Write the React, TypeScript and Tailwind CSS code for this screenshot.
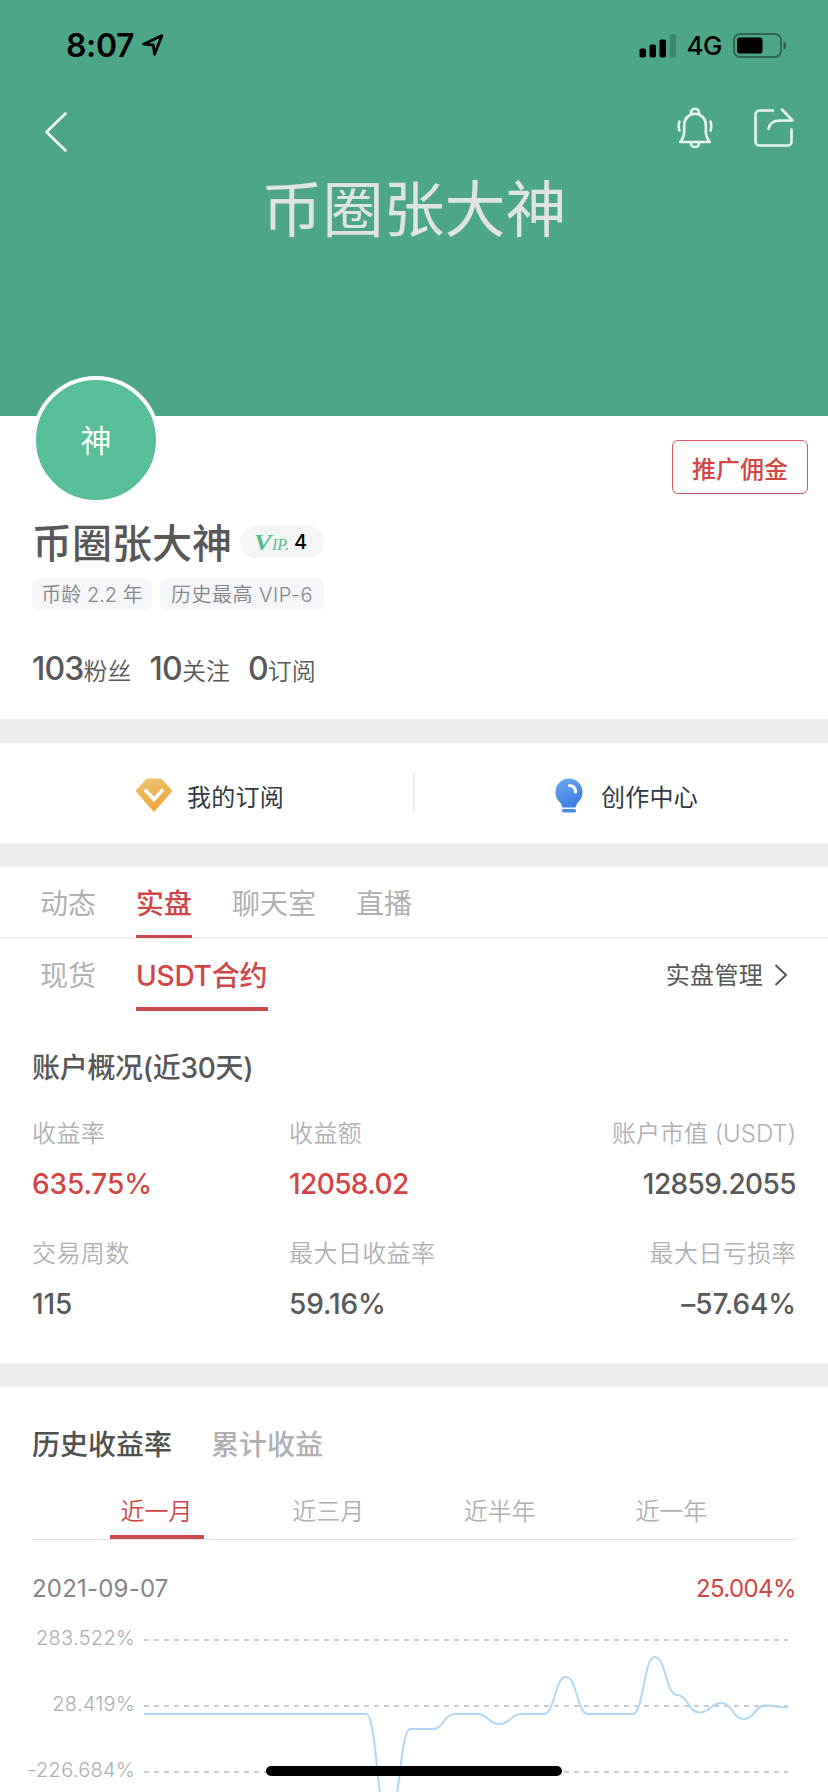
import clsx from "clsx";

const overview = [
  { label: "收益率", value: "635.75%", red: true },
  { label: "收益额", value: "12058.02", red: true },
  { label: "账户市值 (USDT)", value: "12859.2055" },
  { label: "交易周数", value: "115" },
  { label: "最大日收益率", value: "59.16%" },
  { label: "最大日亏损率", value: "–57.64%" },
];

const ranges = ["近一月", "近三月", "近半年", "近一年"];

// one y position per day, in chart pixels
const series = [
  94, 94, 94, 94, 94, 94, 94, 94, 94, 94, 94, 203, 109, 109, 94, 94, 104, 94,
  94, 57, 94, 94, 94, 37, 75, 92.5, 83, 99, 85.5, 87.5,
];

function linePath(values: number[]) {
  const step = 644 / (values.length - 1);
  return values
    .map((y, i) => {
      const x = i * step;
      if (i === 0) return `M${x} ${y}`;
      const mid = x - step / 2;
      return `C${mid} ${values[i - 1]} ${mid} ${y} ${x} ${y}`;
    })
    .join(" ");
}

function StatusBar() {
  return (
    <div className="flex h-[92px] items-center justify-between pl-[66px] pr-[41px] text-black">
      <div className="flex items-center gap-[8px]">
        <span className="text-[32px] font-semibold leading-none tracking-[-0.4px]">8:07</span>
        <svg width="22" height="22" viewBox="0 0 22 22" fill="none" className="mb-0.5">
          <path
            d="M1.5 10.2 20 1.6 12.6 20.2 11.2 11z"
            stroke="currentColor"
            strokeWidth="2.8"
            strokeLinejoin="round"
          />
        </svg>
      </div>
      <div className="flex items-center">
        <svg width="38" height="24" viewBox="0 0 38 24" fill="currentColor">
          <rect x="0.5" y="14.5" width="6.5" height="9" rx="1.8" />
          <rect x="10.5" y="10.5" width="6.5" height="13" rx="1.8" />
          <rect x="20.5" y="5.5" width="6.5" height="18" rx="1.8" />
          <rect x="30.7" y="0" width="6.5" height="23.5" rx="1.8" opacity="0.2" />
        </svg>
        <span className="ml-[10px] text-[26px] font-[450] leading-none tracking-[-0.5px]">4G</span>
        <svg width="54" height="26" viewBox="0 0 54 26" className="ml-[11px]">
          <rect x="1" y="1" width="47" height="23" rx="6" fill="none" stroke="black" strokeWidth="1.8" opacity="0.4" />
          <rect x="4" y="4.5" width="25.5" height="16" rx="2.8" />
          <path d="M50.5 8.5c3.2 1.4 3.2 7 0 8.4z" opacity="0.45" />
        </svg>
      </div>
    </div>
  );
}

function BellIcon() {
  return (
    <svg width="36" height="42" viewBox="0 0 36 42" fill="none" stroke="#e6f5ee" strokeWidth="2.6" strokeLinecap="round" strokeLinejoin="round">
      <path d="M14 6.800v-1.200a4 3.800 0 0 1 8 0v1.200" />
      <path d="M3.200 35c2.800-3.400 4-6.800 4-11v-6.400a10.800 10.800 0 0 1 21.600 0v6.400c0 4.200 1.200 7.600 4 11z" />
      <path d="M14 36.400a4 3.600 0 0 0 8 0" />
      <path d="M2.400 14.500q-1.400 4.500 0 9M33.600 14.500q1.400 4.500 0 9" />
    </svg>
  );
}

function ShareIcon() {
  return (
    <svg width="42" height="42" viewBox="0 0 42 42" fill="none" stroke="#e6f5ee" strokeWidth="2.6" strokeLinecap="round" strokeLinejoin="round">
      <path d="M20 3.500H6.500a4 4 0 0 0-4 4v27a4 4 0 0 0 4 4h28a4 4 0 0 0 4-4V22.500" />
      <path d="M29 2.500 39.500 13.500H27c-6.500 0-10.500 3-11.500 8.500" />
    </svg>
  );
}

function Header() {
  return (
    <header className="h-[416px] bg-[#4da786]">
      <StatusBar />
      <div className="flex h-[80px] items-center justify-between pl-[44px] pr-[33px]">
        <svg width="24" height="40" viewBox="0 0 24 40" fill="none">
          <path d="M21.500 1.500 2.500 20 21.500 38.500" stroke="#f4fffa" strokeWidth="2.500" strokeLinecap="round" strokeLinejoin="round" />
        </svg>
        <div className="mb-[8px] flex items-center gap-[40px]">
          <BellIcon />
          <ShareIcon />
        </div>
      </div>
      <h1 className="mt-[6px] text-center text-[61px] leading-[64px] text-[#dfe3e1]">币圈张大神</h1>
    </header>
  );
}

function Profile() {
  const stats = [
    ["103", "粉丝"],
    ["10", "关注"],
    ["0", "订阅"],
  ];
  return (
    <section className="h-[303px] pl-8 pr-5 text-[#585858]">
      <div className="flex h-[88px] items-start justify-between">
        <div className="relative -mt-10 flex size-32 items-center justify-center rounded-full border-4 border-white bg-[#58be98] text-[31px] leading-none text-white">
          神
        </div>
        <button className="mt-6 h-[54px] w-[136px] rounded-md border border-[#d9585c] pt-[5px] text-[24px] font-medium text-[#d24543]">
          推广佣金
        </button>
      </div>
      <div className="flex h-[74px] items-center gap-2 pt-[2px]">
        <h2 className="pt-[4px] text-[40px] font-medium leading-none">币圈张大神</h2>
        <div className="flex h-8 w-[84px] items-center rounded-full bg-[#f5f5f5] pl-[14px]">
          <span className="flex items-baseline font-[Liberation_Serif,serif] italic leading-none text-[#52bd94]">
            <span className="origin-left scale-x-110 text-[24px] font-bold">V</span>
            <span className="ml-[2px] mt-1 text-[16px]">IP.</span>
          </span>
          <span className="ml-[5px] text-[20px] font-[450] leading-none text-black">4</span>
        </div>
      </div>
      <div className="flex gap-2 text-[20px] font-[350] leading-[34px] text-[#858585]">
        <span className="h-8 w-[120px] whitespace-nowrap rounded-md bg-[#f5f6f9] text-center">币龄 2.2 年</span>
        <span className="h-8 w-[164px] whitespace-nowrap rounded-md bg-[#f5f6f9] text-center tracking-[0.5px]">历史最高 VIP-6</span>
      </div>
      <div className="flex items-baseline gap-[18px] pt-[43px]">
        {stats.map(([count, name]) => (
          <div key={name} className="flex items-baseline leading-8">
            <span className="text-[32px] font-medium tracking-[-0.8px]">{count}</span>
            <span className="text-[24px] font-[350]">{name}</span>
          </div>
        ))}
      </div>
    </section>
  );
}

function Shortcuts() {
  return (
    <section className="flex h-[148px] items-center border-y-[24px] border-[#efefef] text-[24px] text-[#333943]">
      <div className="flex w-[413px] items-center justify-center gap-[14px] pl-[6px] pt-[6px]">
        <svg width="38" height="34" viewBox="0 0 38 34" className="-mt-[3px]">
          <defs>
            <linearGradient id="gem" x1="0" y1="0" x2="0.3" y2="1">
              <stop offset="0" stopColor="#eac678" />
              <stop offset="1" stopColor="#f0a637" />
            </linearGradient>
          </defs>
          <path d="M11.500 0.500h15L37.500 13 19 34 0.500 13z" fill="url(#gem)" />
          <path d="m10 11.500 9 10 9-10" fill="none" stroke="white" strokeWidth="3.600" />
        </svg>
        <span className="pt-[3px] tracking-[0.2px]">我的订阅</span>
      </div>
      <div className="h-10 w-0.5 bg-[#eee]" />
      <div className="flex w-[413px] items-center justify-center gap-[18px] pl-[10px] pt-[6px]">
        <svg width="28" height="35" viewBox="0 0 28 35" className="-mt-[2px]">
          <defs>
            <linearGradient id="bulb" x1="0" y1="0" x2="0.4" y2="1">
              <stop offset="0" stopColor="#6faaf0" />
              <stop offset="1" stopColor="#3f7fe6" />
            </linearGradient>
          </defs>
          <path
            d="M14 0.500A13.500 13.500 0 0 0 0.500 14c0 5.500 2.500 8.500 5 11 1.300 1.500 1 4.500 2.500 4.500h12c1.500 0 1.200-3 2.500-4.500 2.500-2.500 5-5.500 5-11A13.500 13.500 0 0 0 14 0.500z"
            fill="url(#bulb)"
          />
          <rect x="7" y="31" width="14" height="3.500" rx="1.500" fill="#4a88e4" />
          <path d="M14.500 7.500c4 0 6 3 6 6.500" fill="none" stroke="white" strokeWidth="3.200" strokeLinecap="round" />
        </svg>
        <span className="pt-[3px] tracking-[0.2px]">创作中心</span>
      </div>
    </section>
  );
}

function Tabs() {
  return (
    <>
      <nav className="flex h-[72px] gap-10 border-b-2 border-[#eee] pl-10 text-[28px] leading-[75px] text-[#b0b0b2]">
        {["动态", "实盘", "聊天室", "直播"].map((tab) => (
          <span
            key={tab}
            className={clsx("h-[71px]", tab === "实盘" && "border-b-3 border-[#cb4b4d] font-medium text-[#d04749]")}
          >
            {tab}
          </span>
        ))}
      </nav>
      <nav className="flex h-[72px] justify-between pl-10 pr-[40px] text-[28px] leading-[74px] text-[#b0b0b2]">
        <div className="flex gap-10">
          <span>现货</span>
          <span className="h-[72px] w-[132px] whitespace-nowrap border-b-4 border-[#cb4b4d] font-medium tracking-[-0.2px] text-[#d04749]">
            USDT合约
          </span>
        </div>
        <div className="flex items-center gap-[11px] text-[24px] tracking-[0.3px] text-[#585858]">
          <span className="pt-px">实盘管理</span>
          <svg width="14" height="24" viewBox="0 0 14 24" fill="none">
            <path d="M1.500 2 12 12 1.500 22" stroke="currentColor" strokeWidth="2" />
          </svg>
        </div>
      </nav>
    </>
  );
}

function Overview() {
  return (
    <section className="h-[376px] border-b-[24px] border-[#efefef] px-8 pt-[37px] text-[#585858]">
      <h3 className="text-[28px] font-medium leading-[40px] tracking-[-0.3px]">账户概况(近30天)</h3>
      <div className="mt-[26px] grid grid-cols-[257px_1fr_auto] gap-y-[20px]">
        {overview.map((item, i) => (
          <div key={item.label} className={clsx(i % 3 === 2 && "text-right")}>
            <div
              className={clsx(
                "text-[24px] font-[350] leading-[40px] text-[#b0b0b2]",
                i === 2 ? "tracking-normal" : "tracking-[0.4px]"
              )}
            >
              {item.label}
            </div>
            <div
              className={clsx(
                "my-[5px] text-[28px] font-medium leading-[50px]",
                item.value.length > 7 ? "tracking-[-0.6px]" : "tracking-[-0.1px]",
                item.red && "text-[#d24543]"
              )}
            >
              {item.value}
            </div>
          </div>
        ))}
      </div>
    </section>
  );
}

function Chart() {
  return (
    <div className="flex">
      <div className="flex w-[112px] shrink-0 flex-col items-end gap-[46px] pr-[9px] pt-[8px] text-[20px] font-[350] leading-5 tracking-[0.3px] text-[#adadaf]">
        <span>283.522%</span>
        <span>28.419%</span>
        <span>-226.684%</span>
      </div>
      <svg width="644" height="172" viewBox="0 0 644 172" fill="none" className="shrink-0">
        {[20, 86, 152].map((y) => (
          <path key={y} d={`M0 ${y}H644`} stroke="#bdbdbd" strokeWidth="1.600" strokeDasharray="5 5" />
        ))}
        <path d={linePath(series)} stroke="#b0d8f6" strokeWidth="2" />
      </svg>
    </div>
  );
}

function History() {
  return (
    <section className="px-8 pt-[38px]">
      <div className="flex gap-[39px] text-[28px] font-medium leading-[40px]">
        <h3 className="text-[#505050]">历史收益率</h3>
        <h3 className="text-[#b0b0b2]">累计收益</h3>
      </div>
      <div className="mt-[19px] flex justify-evenly border-b border-[#e2e2e4] text-[24px] font-[350] leading-[56px] text-[#b0b0b2]">
        {ranges.map((range, i) => (
          <span
            key={range}
            className={clsx(
              "h-[55px] w-[94px] text-center",
              i === 0 && "border-b-4 border-[#cb4b4d] text-[#d24543]"
            )}
          >
            {range}
          </span>
        ))}
      </div>
      <div className="mt-[29px] flex justify-between text-[24px] leading-[40px]">
        <span className="tracking-[0.2px] text-[#858585]">2021-09-07</span>
        <span className="tracking-[-0.6px] text-[#d24543]">25.004%</span>
      </div>
      <div className="mt-[11px]">
        <Chart />
      </div>
    </section>
  );
}

export default function App() {
  return (
    <div className="relative h-[1792px] w-[828px] overflow-hidden bg-white font-[Inter,Noto_Sans_CJK_SC,sans-serif]">
      <Header />
      <Profile />
      <Shortcuts />
      <Tabs />
      <Overview />
      <History />
      <div className="absolute bottom-4 left-[266px] h-[10px] w-[296px] rounded-full bg-black" />
    </div>
  );
}
